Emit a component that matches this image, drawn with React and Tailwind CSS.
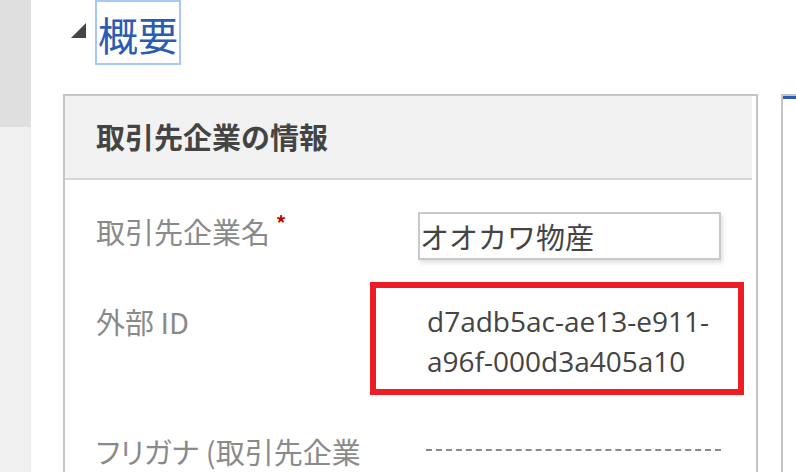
import React from "react";

export default function App() {
  const jp = { fontFamily: '"Noto Sans CJK JP", "Noto Sans", sans-serif' };
  return (
    <div
      className="w-[796px] h-[472px] overflow-hidden flex bg-white"
      style={jp}
    >
      <div className="w-[31px] shrink-0 flex flex-col">
        <div className="h-[127px] bg-[#dfdfdf]" />
        <div className="flex-1 bg-[#f0f0f0]" />
      </div>
      <div className="flex-1 flex flex-col pl-[32px]">
        <div className="flex items-start h-[65px] shrink-0">
          <svg
            className="ml-[8px] mt-[23px] shrink-0"
            width="15"
            height="15"
            viewBox="0 0 15 15"
          >
            <polygon points="15,0 15,15 0,15" fill="#454545" />
          </svg>
          <div className="ml-[9px] w-[86px] h-[65px] border-2 border-[#a8c6fa] flex items-center justify-center whitespace-nowrap text-[40px] leading-none text-[#2b5cb5] pt-[2px]">
            概要
          </div>
        </div>
        <div className="mt-[29px] flex items-start">
          <div className="w-[695px] h-[500px] shrink-0 border-2 border-[#c3c6c9] pr-[4px] flex flex-col">
            <div className="h-[84px] bg-[#f2f2f2] border-b-2 border-[#d6d6d6] flex items-center pl-[31px] text-[29px] font-bold text-[#444444]">
              取引先企業の情報
            </div>
            <div className="flex flex-col pl-[31px] relative">
              <div className="flex mt-[32px]">
                <div className="w-[322px] flex items-start text-[29px] leading-[36px] text-[#8a8a8a] pt-[1px] [font-feature-settings:'palt']">
                  取引先企業名
                  <span className="ml-[6px] text-[20px] leading-none text-[#c00000] font-bold">
                    *
                  </span>
                </div>
                <div className="w-[303px] h-[48px] border-2 border-[#c9c9c9] shadow-[2px_3px_4px_rgba(0,0,0,0.12)] flex items-center text-[29px] text-[#444444] leading-none">
                  オオカワ物産
                </div>
              </div>
              <div className="flex mt-[41px]">
                <div className="w-[322px] text-[29px] leading-[36px] text-[#8a8a8a] pt-[2px] [font-feature-settings:'palt']">
                  外部 ID
                </div>
                <div
                  className="pl-[9px] w-[303px] text-[28px] leading-[40px] text-[#444444]"
                  style={{ fontFamily: '"Open Sans", sans-serif' }}
                >
                  <div>d7adb5ac-ae13-e911-</div>
                  <div>a96f-000d3a405a10</div>
                </div>
              </div>
              <div className="absolute left-[305px] top-[102px] w-[374px] h-[113px] border-[6px] border-[#ee1c25]" />
              <div className="flex mt-[50px]">
                <div className="w-[322px] shrink-0">
                  <div className="w-[274px] text-[29px] leading-[40px] text-[#8a8a8a] [font-feature-settings:'palt']">
                    フリガナ (取引先企業名)
                  </div>
                </div>
                <div className="pl-[8px] w-[303px] pt-[18px]">
                  <div className="border-t-2 border-dashed border-[#8a8a8a]" />
                </div>
              </div>
            </div>
          </div>
          <div className="ml-[23px] flex-1 h-[500px] border-2 border-r-0 border-[#c3c6c9] flex flex-col">
            <div className="h-[3px] bg-[#2b5cb5]" />
          </div>
        </div>
      </div>
    </div>
  );
}
